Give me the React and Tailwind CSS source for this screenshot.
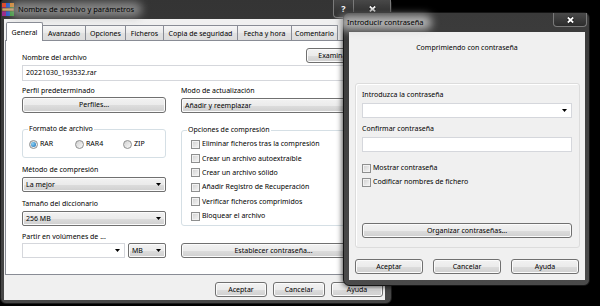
import React from "react";

const F = "font-['Noto_Sans',sans-serif]";
const BTN =
  "border border-[#707070] bg-[linear-gradient(#f2f2f2_0%,#ebebeb_50%,#dddddd_51%,#cfcfcf_100%)] shadow-[inset_0_0_0_1px_#fbfbfb]";

function Arrow() {
  return (
    <svg width="5" height="3" viewBox="0 0 5 3" className="shrink-0">
      <path d="M0 0H5L2.5 3Z" fill="#000" />
    </svg>
  );
}

function XGlyph() {
  return (
    <svg width="9" height="8" viewBox="0 0 9 8">
      <path d="M1.8 1.5L7.2 6.5M7.2 1.5L1.8 6.5" stroke="#111" strokeWidth="3.4" />
      <path d="M1.8 1.5L7.2 6.5M7.2 1.5L1.8 6.5" stroke="#fff" strokeWidth="1.8" />
    </svg>
  );
}

function WinRarIcon() {
  return (
    <svg width="12" height="13" viewBox="0 0 12 13" className="ml-[-2px] shrink-0">
      <rect x="0" y="0" width="4" height="13" fill="#9c2a8c" />
      <rect x="4" y="0" width="4" height="13" fill="#2b5fcc" />
      <rect x="8" y="0" width="4" height="13" fill="#3a9f3a" />
      <rect x="0" y="0" width="4" height="4" fill="#e04a2a" />
      <rect x="8" y="0" width="4" height="4" fill="#e08a2a" />
      <rect x="0" y="5" width="12" height="3" fill="#cfa868" stroke="#5a3d1a" strokeWidth="0.6" />
    </svg>
  );
}

function Btn({ children, className = "" }) {
  return (
    <div className={`flex items-center justify-center rounded-[3px] ${BTN} ${className}`}>
      <span>{children}</span>
    </div>
  );
}

function Drop({ children, className = "" }) {
  return (
    <div className={`flex items-center justify-between rounded-[2px] pl-[3px] pr-[4px] ${BTN} ${className}`}>
      <span>{children}</span>
      <Arrow />
    </div>
  );
}

function Label({ children, className = "" }) {
  return <div className={`h-[10px] whitespace-nowrap leading-[10px] ${className}`}>{children}</div>;
}

function Check({ label, className = "" }) {
  return (
    <div className={`flex items-center gap-[2px] whitespace-nowrap ${className}`}>
      <div className="h-[9px] w-[9px] shrink-0 border border-[#8e8f8f] bg-[linear-gradient(135deg,#cfcfcf,#f7f7f7)] shadow-[inset_0_0_0_1px_#f2f2f2]" />
      <span>{label}</span>
    </div>
  );
}

function Radio({ checked, label, className = "" }) {
  return (
    <div className={`flex items-center gap-[2px] ${className}`}>
      <div className="flex h-[9px] w-[9px] shrink-0 items-center justify-center rounded-full border border-[#8e8f8f] bg-[linear-gradient(135deg,#d0d0d0,#fafafa)]">
        {checked && (
          <div className="h-[5px] w-[5px] rounded-full bg-[radial-gradient(circle_at_35%_35%,#8ad3f7,#1668b0)]" />
        )}
      </div>
      <span>{label}</span>
    </div>
  );
}

const TABS = [
  ["Avanzado", "w-[43px]"],
  ["Opciones", "w-[40px]"],
  ["Ficheros", "w-[38px]"],
  ["Copia de seguridad", "w-[74px]"],
  ["Fecha y hora", "w-[54px]"],
  ["Comentario", "w-[46px]"],
];

const OPTS = [
  "Eliminar ficheros tras la compresión",
  "Crear un archivo autoextraíble",
  "Crear un archivo sólido",
  "Añadir Registro de Recuperación",
  "Verificar ficheros comprimidos",
  "Bloquear el archivo",
];

function MainWindow() {
  return (
    <div className="absolute left-0 top-[-2px] flex h-[306px] w-[392px] flex-col rounded-[6px] border border-[#1c1c1c] bg-[linear-gradient(#343434,#474747)] pb-[3px] pl-[3px] pr-[6px]">
      <div className="relative flex h-[20px] shrink-0 items-center pt-[1px]">
        <WinRarIcon />
        <div className="relative ml-[4px]">
          <div className="absolute inset-x-[-8px] inset-y-[-2px] rounded-full bg-[#a8a8a8]/70 blur-[4px]" />
          <span className="relative whitespace-nowrap text-[7.5px] text-black">Nombre de archivo y parámetros</span>
        </div>
      </div>
      <div className="absolute left-[332px] top-[1px] flex h-[18px]">
        <div className="flex w-[21px] items-center justify-center rounded-bl-[4px] border border-t-0 border-[#7a7a7a] bg-[linear-gradient(#484848,#2a2a2a)] text-[9px] font-bold leading-none text-white">
          ?
        </div>
        <div className="flex w-[37px] items-center justify-center rounded-br-[4px] border border-l-0 border-t-0 border-[#7a7a7a] bg-[linear-gradient(#484848,#2a2a2a)]">
          <XGlyph />
        </div>
      </div>

      <div className="flex w-[381px] flex-1 flex-col bg-[#f0f0f0]">
        <div className="flex h-[21px] shrink-0 items-end pl-[2px]">
          <div className="relative z-10 mb-[-1px] flex h-[19px] w-[37px] items-center justify-center rounded-t-[2px] border border-b-0 border-[#898c95] bg-white pt-[2px]">
            General
          </div>
          {TABS.map(([t, w]) => (
            <div
              key={t}
              className={`flex h-[15px] items-center justify-center whitespace-nowrap border-r border-t border-[#898c95] bg-[linear-gradient(#f6f6f6,#e9e9e9_50%,#e1e1e1_51%,#dcdcdc)] pt-[2px] ${w}`}
            >
              {t}
            </div>
          ))}
        </div>

        <div className="ml-[1px] flex h-[235px] w-[377px] shrink-0 flex-col border border-[#898c95] bg-white pl-[16px] pt-[7px]">
          <div className="flex h-[15px] w-[344px] items-end justify-between">
            <Label>Nombre del archivo</Label>
            <Btn className="h-[15px] w-[60px]">Examinar...</Btn>
          </div>
          <div className="mt-[2px] flex h-[16px] w-[344px] items-center border border-[#d5d7dc] pl-[3px]">
            20221030_193532.rar
          </div>

          <div className="mt-[5px] flex gap-[15px]">
            <div className="flex w-[144px] flex-col">
              <Label>Perfil predeterminado</Label>
              <Btn className="mt-[1px] h-[16px]">Perfiles...</Btn>
              <div className="relative mt-[16px] h-[29px] rounded-[3px] border border-[#d5dfe5] pl-[6px] pt-[9px]">
                <div className="absolute left-[5px] top-[-6px] bg-white px-[1px]">
                  <Label>Formato de archivo</Label>
                </div>
                <div className="flex h-[10px] items-center">
                  <Radio checked label="RAR" className="w-[46px]" />
                  <Radio label="RAR4" className="w-[48px]" />
                  <Radio label="ZIP" />
                </div>
              </div>
              <Label className="mt-[7px]">Método de compresión</Label>
              <Drop className="mt-[2px] h-[15px]">La mejor</Drop>
              <Label className="mt-[7px]">Tamaño del diccionario</Label>
              <Drop className="mt-[2px] h-[15px]">256 MB</Drop>
              <Label className="mt-[6px]">Partir en volúmenes de ...</Label>
              <div className="mt-[1px] flex h-[15px] gap-[3px]">
                <div className="flex w-[103px] items-center justify-end border border-[#d5d7dc] bg-white pr-[4px]">
                  <Arrow />
                </div>
                <Drop className="w-[38px]">MB</Drop>
              </div>
            </div>

            <div className="flex w-[185px] flex-col">
              <Label>Modo de actualización</Label>
              <Drop className="mt-[2px] h-[15px]">Añadir y reemplazar</Drop>
              <div className="relative mt-[17px] flex h-[96px] flex-col rounded-[3px] border border-[#d5dfe5] pl-[9px] pt-[6px]">
                <div className="absolute left-[5px] top-[-6px] bg-white px-[1px]">
                  <Label>Opciones de compresión</Label>
                </div>
                {OPTS.map((o) => (
                  <Check key={o} label={o} className="h-[14.4px]" />
                ))}
              </div>
              <Btn className="mt-[17px] h-[15px]">Establecer contraseña...</Btn>
            </div>
          </div>
        </div>

        <div className="mt-[7px] flex justify-end gap-[6px] pr-[2px]">
          <Btn className="h-[15px] w-[52px]">Aceptar</Btn>
          <Btn className="h-[15px] w-[52px]">Cancelar</Btn>
          <Btn className="h-[15px] w-[52px]">Ayuda</Btn>
        </div>
      </div>
    </div>
  );
}

function PasswordDialog() {
  return (
    <div className="absolute left-[343px] top-[12px] flex h-[274px] w-[247px] flex-col rounded-[6px] border border-[#151515] bg-[linear-gradient(#3a3a3a,#4a4a4a)] pb-[5px] pl-[5px] pr-[4px] shadow-[0_0_6px_rgba(0,0,0,0.9)]">
      <div className="relative flex h-[19px] shrink-0 items-center">
        <div className="relative ml-[-2px]">
          <div className="absolute inset-x-[-8px] inset-y-[-2px] rounded-full bg-[#d0d0d0]/80 blur-[4px]" />
          <span className="relative whitespace-nowrap text-[7.5px] text-black">Introducir contraseña</span>
        </div>
      </div>
      <div className="absolute left-[209px] top-0 flex h-[14px] w-[34px] items-center justify-center rounded-b-[4px] border border-t-0 border-[#7a7a7a] bg-[linear-gradient(#4a4a4a,#2c2c2c)]">
        <XGlyph />
      </div>

      <div className="flex w-[236px] flex-1 flex-col bg-[#f0f0f0]">
        <Label className="mt-[11px] text-center">Comprimiendo con contraseña</Label>
        <div className="ml-[6px] mt-[30px] flex h-[165px] w-[225px] flex-col rounded-[3px] border border-[#dcdcdc] pl-[6px] pt-[6px] shadow-[inset_1px_1px_0_#fff]">
          <Label>Introduzca la contraseña</Label>
          <div className="mt-[3px] flex h-[15px] w-[210px] items-center justify-end border border-[#d5d7dc] bg-white pr-[4px]">
            <Arrow />
          </div>
          <Label className="mt-[6px]">Confirmar contraseña</Label>
          <div className="mt-[3px] h-[15px] w-[210px] border border-[#d5d7dc] bg-white" />
          <Check label="Mostrar contraseña" className="mt-[9px] h-[14px]" />
          <Check label="Codificar nombres de fichero" className="h-[14px]" />
          <Btn className="mt-[34px] h-[15px] w-[210px]">Organizar contraseñas...</Btn>
        </div>
        <div className="mt-[11px] flex justify-between px-[6px]">
          <Btn className="h-[15px] w-[68px]">Aceptar</Btn>
          <Btn className="h-[15px] w-[68px]">Cancelar</Btn>
          <Btn className="h-[15px] w-[68px]">Ayuda</Btn>
        </div>
      </div>
    </div>
  );
}

export default function App() {
  return (
    <div className={`relative h-[306px] w-[600px] overflow-hidden bg-black text-[7px] leading-[10px] text-black ${F}`}>
      <MainWindow />
      <PasswordDialog />
    </div>
  );
}
